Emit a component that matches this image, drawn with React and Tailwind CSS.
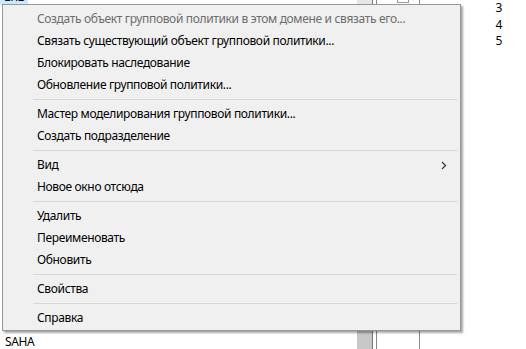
import React from 'react';

const groups = [
  [
    { label: 'Создать объект групповой политики в этом домене и связать его...', disabled: true },
    { label: 'Связать существующий объект групповой политики...' },
    { label: 'Блокировать наследование' },
    { label: 'Обновление групповой политики...' },
  ],
  [
    { label: 'Мастер моделирования групповой политики...' },
    { label: 'Создать подразделение' },
  ],
  [
    { label: 'Вид', submenu: true },
    { label: 'Новое окно отсюда' },
  ],
  [
    { label: 'Удалить' },
    { label: 'Переименовать' },
    { label: 'Обновить' },
  ],
  [{ label: 'Свойства' }],
  [{ label: 'Справка' }],
];

const MenuItem = ({ item }) => (
  <div className="h-[22px] flex items-center pl-[34px] pr-3 relative">
    <span className={item.disabled ? 'text-[#6d6d6d]' : 'text-black'}>{item.label}</span>
    {item.submenu && (
      <svg className="absolute right-[13px] top-[7px]" width="6" height="9" viewBox="0 0 6 9">
        <path d="M1 1 L4.5 4.5 L1 8" fill="none" stroke="#333" strokeWidth="1.2" />
      </svg>
    )}
  </div>
);

const App = () => {
  return (
    <div
      className="relative w-[526px] h-[349px] bg-white overflow-hidden text-[12px] tracking-[-0.35px]"
      style={{ fontFamily: '"Noto Sans", "Open Sans", sans-serif' }}
    >
      {/* background window content */}
      <div className="flex h-full">
        <div className="w-[357px] flex flex-col justify-between">
          <div className="w-[28px] h-[5px] bg-[#cce8ff] relative overflow-hidden">
            <span className="absolute left-[4px] -top-[12px] text-black">ЕКВ</span>
          </div>
          <div className="flex flex-col pl-[5px] leading-[15px]">
            <span className="text-black">NTL</span>
            <span className="text-black">SAHA</span>
          </div>
        </div>
        <div className="w-[15px] bg-[#e6e6e6] flex flex-col justify-end">
          <div className="h-[18px] bg-[#c8c8c8]" />
        </div>
        <div className="w-[1px] bg-[#777]" />
        <div className="w-[3px]" />
        <div className="w-[1px] bg-[#888]" />
        <div className="w-[42px] relative">
          <div className="absolute left-[20px] top-0 w-[12px] h-[3px] border border-[#999] border-t-0" />
        </div>
        <div className="w-[1px] bg-[#888]" />
        <div className="flex-1 flex flex-col items-end pr-[24px] leading-[16.5px] pt-[0px]">
          <span>3</span>
          <span>4</span>
          <span>5</span>
        </div>
      </div>

      {/* context menu */}
      <div className="absolute left-[2px] top-[4px] w-[459px] h-[327px] bg-[#f0f0f0] border border-[#979797] shadow-[2px_2px_2px_rgba(0,0,0,0.35)] pt-[3px]">
        {groups.map((g, gi) => (
          <div key={gi}>
            {gi > 0 && (
              <div className="h-[7px] flex items-center">
                <div className="ml-[30px] mr-[3px] flex-1 h-[1px] bg-[#d7d7d7]" />
              </div>
            )}
            {g.map((item, ii) => (
              <MenuItem key={ii} item={item} />
            ))}
          </div>
        ))}
      </div>
    </div>
  );
};

export default App;
